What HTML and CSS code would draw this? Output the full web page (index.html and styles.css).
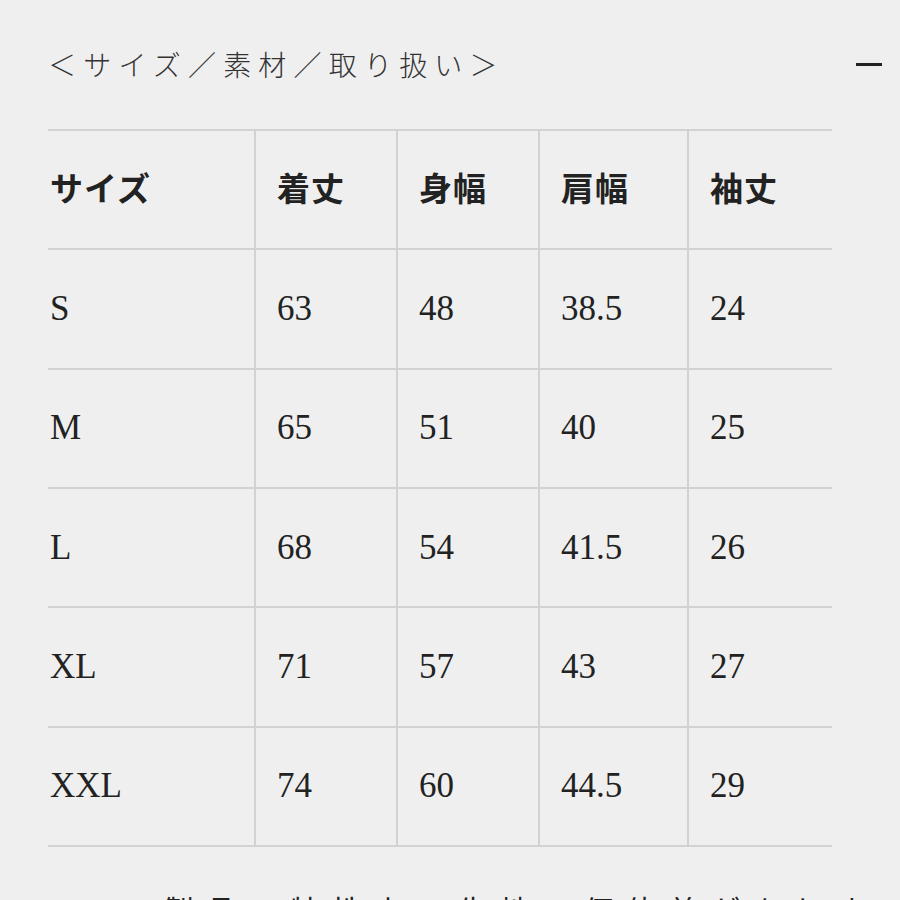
FILE: index.html
```html
<!DOCTYPE html>
<html lang="ja">
<head>
<meta charset="utf-8">
<title>サイズ表</title>
<link rel="stylesheet" href="styles.css">
</head>
<body>
<div class="page">
  <div class="head-row">
    <h2 class="title">＜サイズ／素材／取り扱い＞</h2>
    <span class="minus" aria-label="閉じる"></span>
  </div>
  <div class="size-table">
    <div class="cell th first">サイズ</div>
    <div class="cell th">着丈</div>
    <div class="cell th">身幅</div>
    <div class="cell th">肩幅</div>
    <div class="cell th">袖丈</div>

    <div class="cell first">S</div>
    <div class="cell">63</div>
    <div class="cell">48</div>
    <div class="cell">38.5</div>
    <div class="cell">24</div>

    <div class="cell first">M</div>
    <div class="cell">65</div>
    <div class="cell">51</div>
    <div class="cell">40</div>
    <div class="cell">25</div>

    <div class="cell first">L</div>
    <div class="cell">68</div>
    <div class="cell">54</div>
    <div class="cell">41.5</div>
    <div class="cell">26</div>

    <div class="cell first">XL</div>
    <div class="cell">71</div>
    <div class="cell">57</div>
    <div class="cell">43</div>
    <div class="cell">27</div>

    <div class="cell first">XXL</div>
    <div class="cell">74</div>
    <div class="cell">60</div>
    <div class="cell">44.5</div>
    <div class="cell">29</div>
  </div>
  <p class="note">製品の特性上、生地の個体差があります。</p>
</div>
</body>
</html>
```

FILE: styles.css
```css
html, body {
  margin: 0;
  padding: 0;
  background: #efefef;
}

body {
  font-family: "Liberation Serif", "Noto Sans CJK JP", serif;
  color: #222;
  overflow: hidden;
}

.page {
  padding: 0 18px 0 48px;
}

.head-row {
  display: flex;
  align-items: center;
  justify-content: space-between;
  padding-top: 44px;
  height: 40px;
}

.title {
  margin: 0;
  font-family: "Noto Sans CJK JP", sans-serif;
  font-weight: 300;
  font-size: 28px;
  line-height: 40px;
  letter-spacing: 7.2px;
  color: #333;
}

.minus {
  display: block;
  width: 26px;
  height: 3px;
  background: #222;
  margin-top: 1px;
}

.size-table {
  margin-top: 45px;
  width: 784px;
  display: grid;
  grid-template-columns: 206px 142px 142px 149px 145px;
  grid-auto-rows: 119.33px;
  border-top: 2px solid #d2d2d2;
}

.cell {
  box-sizing: border-box;
  display: flex;
  align-items: center;
  padding-left: 21px;
  border-left: 2px solid #d2d2d2;
  border-bottom: 2px solid #d2d2d2;
  font-size: 35px;
  color: #222;
}

.cell.first {
  border-left: none;
  padding-left: 2px;
}

.th {
  font-family: "Noto Sans CJK JP", sans-serif;
  font-weight: 700;
  font-size: 33px;
  letter-spacing: 1px;
  padding-bottom: 6px;
}

.note {
  margin: 42px 0 0 116px;
  font-family: "Noto Sans CJK JP", sans-serif;
  font-size: 30px;
  line-height: 40px;
  letter-spacing: 12px;
  color: #222;
}
```
